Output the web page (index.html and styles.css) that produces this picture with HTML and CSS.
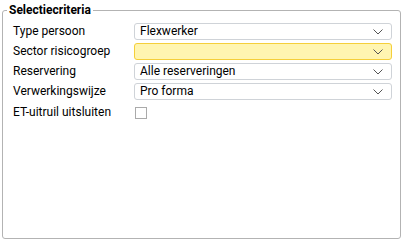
FILE: index.html
```html
<!DOCTYPE html>
<html>
<head>
<meta charset="utf-8">
<link rel="stylesheet" href="styles.css">
</head>
<body>
<fieldset class="criteria">
  <legend class="criteria-title">Selectiecriteria</legend>
  <div class="form-grid">
    <label class="field-label">Type persoon</label>
    <div class="select"><span class="select-value">Flexwerker</span><svg class="chev" width="10" height="6" viewBox="0 0 10 6"><path d="M0.5 0.5 L5 5 L9.5 0.5" fill="none" stroke="#555" stroke-width="1"/></svg></div>
    <label class="field-label">Sector risicogroep</label>
    <div class="select select-required"><span class="select-value"></span><svg class="chev" width="10" height="6" viewBox="0 0 10 6"><path d="M0.5 0.5 L5 5 L9.5 0.5" fill="none" stroke="#555" stroke-width="1"/></svg></div>
    <label class="field-label">Reservering</label>
    <div class="select"><span class="select-value">Alle reserveringen</span><svg class="chev" width="10" height="6" viewBox="0 0 10 6"><path d="M0.5 0.5 L5 5 L9.5 0.5" fill="none" stroke="#555" stroke-width="1"/></svg></div>
    <label class="field-label">Verwerkingswijze</label>
    <div class="select"><span class="select-value">Pro forma</span><svg class="chev" width="10" height="6" viewBox="0 0 10 6"><path d="M0.5 0.5 L5 5 L9.5 0.5" fill="none" stroke="#555" stroke-width="1"/></svg></div>
    <label class="field-label">ET-uitruil uitsluiten</label>
    <div class="check-cell"><span class="checkbox"></span></div>
  </div>
</fieldset>
</body>
</html>
```
FILE: styles.css
```css
html, body {
  margin: 0;
  padding: 0;
  background: #fff;
}
body {
  font-family: Roboto, "Liberation Sans", sans-serif;
  font-size: 12px;
  color: #000;
  padding: 3px 5px 2px 2px;
  height: 241px;
  box-sizing: border-box;
}
.criteria {
  margin: 0;
  border: 1px solid #b3b3b3;
  border-radius: 3px;
  padding: 6px 8px 0 10px;
  height: 236px;
  box-sizing: border-box;
}
.criteria-title {
  font-weight: bold;
  padding: 0 2px;
  margin-left: -6px;
  font-size: 12px;
  line-height: 14px;
}
.form-grid {
  display: grid;
  grid-template-columns: 121px 1fr;
  row-gap: 3px;
  align-items: center;
}
.field-label {
  line-height: 17px;
}
.select {
  height: 17px;
  border: 1px solid #cfd3d8;
  border-radius: 3px;
  box-sizing: border-box;
  display: flex;
  align-items: center;
  justify-content: space-between;
  padding: 0 8px 0 5px;
  background: #fff;
}
.select-required {
  background: #fff5b1;
  border-color: #f5cf3a;
}
.select-value {
  line-height: 15px;
  color: #000;
}
.chev {
  display: block;
}
.check-cell {
  height: 19px;
  display: flex;
  align-items: center;
}
.checkbox {
  width: 12px;
  height: 12px;
  border: 1px solid #aaa;
  box-sizing: border-box;
  background: #fff;
  margin-left: 1px;
}
```
